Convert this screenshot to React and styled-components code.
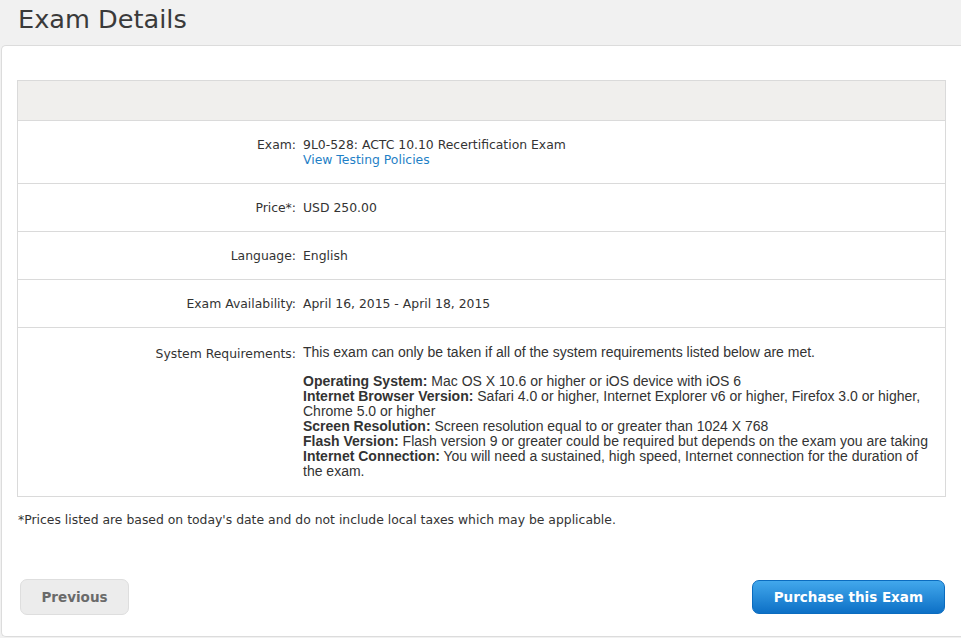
import styled, { createGlobalStyle } from "styled-components";

const GlobalStyle = createGlobalStyle`
  html, body {
    margin: 0;
    padding: 0;
    background: #f1f1f1;
  }
  body {
    font-family: "DejaVu Sans", "Liberation Sans", sans-serif;
    color: #333;
  }
`;

const details = [
  { label: "Price*:", value: "USD 250.00" },
  { label: "Language:", value: "English" },
  { label: "Exam Availability:", value: "April 16, 2015 - April 18, 2015" },
];

const requirements = [
  ["Operating System:", " Mac OS X 10.6 or higher or iOS device with iOS 6"],
  [
    "Internet Browser Version:",
    " Safari 4.0 or higher, Internet Explorer v6 or higher, Firefox 3.0 or higher, Chrome 5.0 or higher",
  ],
  ["Screen Resolution:", " Screen resolution equal to or greater than 1024 X 768"],
  [
    "Flash Version:",
    " Flash version 9 or greater could be required but depends on the exam you are taking",
  ],
  [
    "Internet Connection:",
    " You will need a sustained, high speed, Internet connection for the duration of the exam.",
  ],
];

export default function App() {
  return (
    <Page>
      <GlobalStyle />
      <Title>Exam Details</Title>
      <Card>
        <DetailsTable>
          <HeaderRow />
          <Row>
            <Label>Exam:</Label>
            <Value>
              9L0-528: ACTC 10.10 Recertification Exam
              <br />
              <PolicyLink href="#">View Testing Policies</PolicyLink>
            </Value>
          </Row>
          {details.map((row) => (
            <Row key={row.label}>
              <Label>{row.label}</Label>
              <Value>{row.value}</Value>
            </Row>
          ))}
          <Row $tall>
            <Label>System Requirements:</Label>
            <Requirements>
              <Intro>
                This exam can only be taken if all of the system requirements
                listed below are met.
              </Intro>
              {requirements.map(([name, text]) => (
                <Requirement key={name}>
                  <strong>{name}</strong>
                  {text}
                </Requirement>
              ))}
            </Requirements>
          </Row>
        </DetailsTable>
        <Footnote>
          *Prices listed are based on today's date and do not include local
          taxes which may be applicable.
        </Footnote>
        <Actions>
          <Button>Previous</Button>
          <Button $primary>Purchase this Exam</Button>
        </Actions>
      </Card>
    </Page>
  );
}

const Page = styled.div`
  width: 961px;
  height: 638px;
  overflow: hidden;
`;

const Title = styled.h1`
  margin: 0;
  padding: 2px 0 0 18px;
  height: 43px;
  font-size: 25.6px;
  font-weight: normal;
  line-height: 34px;
  color: #3a3a3a;
`;

const Card = styled.div`
  margin: 0 0 0 1px;
  height: 592px;
  background: #fff;
  border: 1px solid #dcdcdc;
  border-right: none;
  border-radius: 5px 0 0 5px;
  padding: 34px 15px 0 15px;
  box-sizing: border-box;
  display: flex;
  flex-direction: column;
`;

const DetailsTable = styled.div`
  width: 927px;
  border: 1px solid #dadada;
  font-size: 12.4px;
`;

const HeaderRow = styled.div`
  height: 39px;
  background: #f0efed;
  border-bottom: 1px solid #dadada;
`;

const Row = styled.div`
  display: grid;
  grid-template-columns: 278px 1fr;
  column-gap: 7px;
  align-items: start;
  padding: ${(p) => (p.$tall ? "18px 0 17px" : "16px 0")};
  line-height: 15px;
  border-bottom: 1px solid #dadada;

  &:last-child {
    border-bottom: none;
  }
`;

const Label = styled.div`
  text-align: right;
  color: #333;
`;

const Value = styled.div`
  color: #333;
`;

const PolicyLink = styled.a`
  color: #1f7fc6;
  text-decoration: none;
`;

const Requirements = styled.div`
  font-family: "Liberation Sans", Arial, sans-serif;
  font-size: 14px;
  line-height: 15px;
  color: #333;
  padding-right: 12px;
  margin-top: -1px;

  strong {
    font-weight: bold;
  }
`;

const Intro = styled.div`
  margin-bottom: 14px;
`;

const Requirement = styled.div``;

const Footnote = styled.p`
  margin: 15px 0 0 1px;
  font-size: 12.4px;
  color: #333;
`;

const Actions = styled.div`
  margin-top: 52px;
  width: 929px;
  display: flex;
  justify-content: space-between;
  align-items: center;
`;

const Button = styled.button`
  font-family: "DejaVu Sans", "Liberation Sans", sans-serif;
  font-weight: bold;
  font-size: 13.5px;
  border-radius: 7px;
  cursor: pointer;
  ${(p) =>
    p.$primary
      ? `
    height: 34px;
    padding: 0 21px;
    margin-right: 1px;
    color: #fff;
    border: 1px solid #0b6cbf;
    background: linear-gradient(#42a8ec, #0d70c6);
  `
      : `
    margin-left: 3px;
    height: 36px;
    width: 109px;
    color: #6a6a6a;
    border: 1px solid #dedede;
    background: #ececec;
  `}
`;
